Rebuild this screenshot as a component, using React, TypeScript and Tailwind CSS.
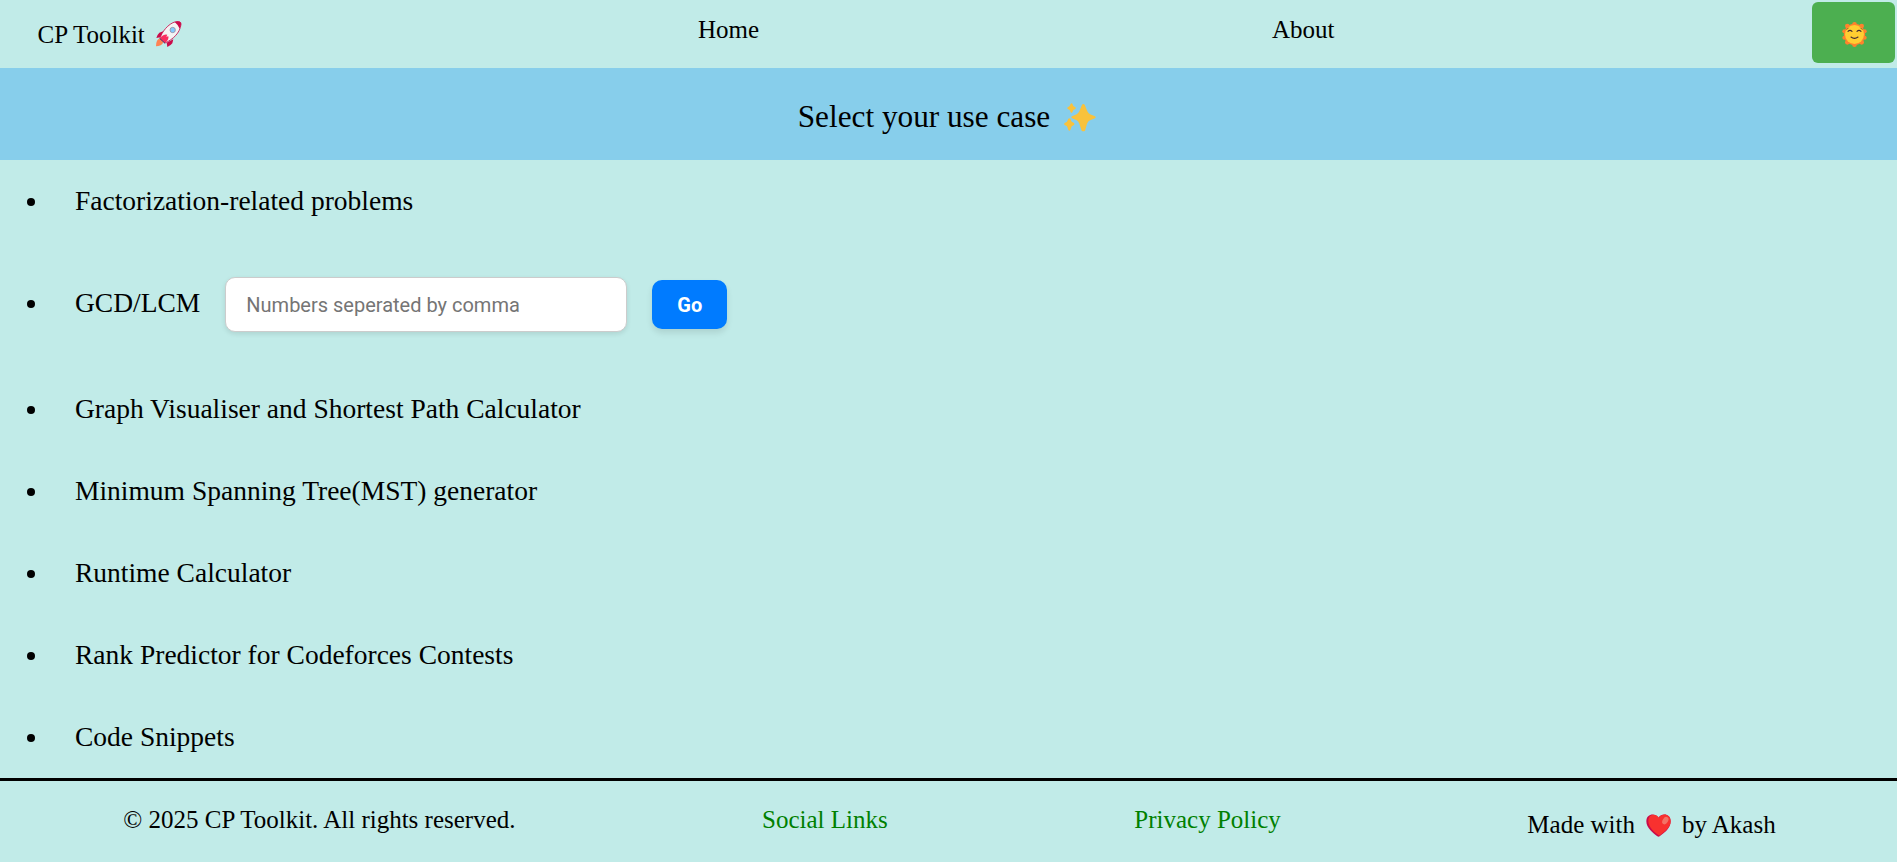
import type { ReactNode } from "react";

function Rocket() {
  return (
    <svg className="ml-[10px] h-[27px] w-[27px] shrink-0" viewBox="45 39 81 81" aria-hidden="true">
      <path d="M60 91 Q48 94 48 115 Q65 115 70 103Z" fill="#ff8354" />
      <path d="M70 70 L58 74 Q50 82 49 90 L65 87Z M100 94 L97 106 Q92 113 82 117 L80 104Z" fill="#ca0b4a" />
      <path d="M60 91 C65 73 84 47 107 41 Q124 38 123 49 C120 75 99 94 75 105Z" fill="#f4f4f4" stroke="#ca0b4a" strokeWidth="2.5" />
      <path d="M104 42 Q124 37 123 49 Q122 56 119 62 Q114 50 104 42Z" fill="#ca0b4a" />
      <path d="M65 85 Q74 77 82 80 L79 86 L85 85 Q88 94 75 106 L60 92Z" fill="#f92f60" />
      <path d="M59 91 L75 106" stroke="#433b6b" strokeWidth="3" />
      <circle cx="98" cy="66" r="8" fill="#83cbff" stroke="#998ea4" strokeWidth="2.5" />
    </svg>
  );
}

function Sparkles() {
  return (
    <svg className="ml-[14px] h-[29px] w-[32px] shrink-0" viewBox="42 36 96 87" fill="#f9c23c" aria-hidden="true">
      <path d="M96 41 Q100 37 104 41 L112 61 Q115 67 120 70 L135 76 Q139 79 135 82 L120 88 Q114 91 111 98 L105 119 Q100 123 95 119 L88 98 Q85 91 80 88 L66 82 Q62 79 66 76 L80 70 Q85 67 88 61Z" />
      <path d="M62 38 Q65 36 67 38 L70 45 L76 49 Q79 51 76 54 L70 57 L67 64 Q64 67 62 64 L59 57 L53 54 Q51 51 53 49 L59 45Z" />
      <path d="M55 83 Q58 80 61 83 L65 92 L72 96 Q74 99 72 102 L65 106 L61 117 Q58 121 55 117 L51 106 L44 102 Q41 99 44 96 L51 92Z" />
    </svg>
  );
}

function Sun() {
  return (
    <svg className="ml-px h-[25px] w-[25px]" viewBox="0 0 75 75" aria-hidden="true">
      <g fill="#ff822d">
        <circle cx="37.5" cy="68" r="7" />
        <circle cx="16" cy="61" r="7" />
        <circle cx="59" cy="61" r="7" />
        <circle cx="7" cy="47" r="6" />
        <circle cx="68" cy="47" r="6" />
        <circle cx="7" cy="28" r="6" />
        <circle cx="68" cy="28" r="6" />
        <circle cx="16" cy="12" r="7" />
        <circle cx="59" cy="12" r="7" />
        <circle cx="37.5" cy="7" r="7" />
        <circle cx="37.5" cy="37.5" r="32" />
      </g>
      <circle cx="37.5" cy="37.5" r="28.5" fill="#ffce31" />
      <g fill="none" stroke="#402a32" strokeWidth="3.2" strokeLinecap="round">
        <path d="M18 28 Q24 22 30 28 M45 28 Q51 22 57 28" />
        <path d="M15 22 L19 18 M60 22 L56 18" strokeWidth="2" />
        <path d="M27 45 Q37.5 53 48 45" />
      </g>
    </svg>
  );
}

function Heart() {
  return (
    <svg className="mx-[11px] mt-[3px] h-[23px] w-[25px] shrink-0" viewBox="0 0 75 69" aria-hidden="true">
      <path d="M37 11 C27 -4 1 -1 1 22 C1 42 21 57 34 67 Q38 69 41 67 C56 56 74 42 74 22 C74 -1 48 -4 37 11Z" fill="#ca0b4a" />
      <path d="M39 11 C30 -3 7 -1 7 21 C7 40 26 55 38 64 Q40 65 42 64 C57 53 74 40 74 22 C74 -1 48 -4 39 11Z" fill="#f8312f" />
      <ellipse cx="58" cy="20" rx="8" ry="12" fill="#f37366" transform="rotate(32 58 20)" />
    </svg>
  );
}

function Bullet() {
  return <span className="mr-[40px] ml-[27px] size-2 shrink-0 rounded-full bg-black" />;
}

function Item({ children }: { children: ReactNode }) {
  return (
    <li className="flex h-[82px] items-center">
      <span className="mt-[2px] flex">
        <Bullet />
      </span>
      <span className="leading-[32px]">{children}</span>
    </li>
  );
}

export default function App() {
  return (
    <div className="flex h-[862px] w-full flex-col overflow-hidden bg-[#c1ebe8] font-['Liberation_Serif',serif] text-[25px] leading-[28px] text-black">
      <header className="flex h-[68px] shrink-0 justify-between pt-[2px] pr-[2px] pl-[37.5px]">
        <div className="flex w-[660.5px] pt-[19px]">
          <span className="whitespace-nowrap">CP Toolkit</span>
          <Rocket />
        </div>
        <a className="mt-[14px] w-[574px]">Home</a>
        <a className="mt-[14px] grow">About</a>
        <button className="flex h-[61px] w-[83px] items-center justify-center rounded-[6px] bg-[#4caf50] pt-[4px]">
          <Sun />
        </button>
      </header>

      <section className="flex h-[92px] shrink-0 items-center justify-center bg-[#87ceeb] pt-[6px] pr-[3px]">
        <h1 className="text-[31.25px] leading-[36px] whitespace-nowrap">Select your use case</h1>
        <Sparkles />
      </section>

      <ul className="shrink-0 text-[27.5px]">
        <Item>Factorization-related problems</Item>
        <li className="flex h-[126px] items-center pb-px">
          <span className="mb-px flex">
            <Bullet />
          </span>
          <span className="mb-[4px] leading-[32px]">GCD/LCM</span>
          <input
            className="ml-[25px] h-[55px] w-[402px] rounded-[10px] border border-[#ccc] bg-white px-[20px] font-[Roboto,sans-serif] text-[20px] shadow-[0_2px_5px_rgba(0,0,0,0.1)] placeholder:text-[#757575]"
            placeholder="Numbers seperated by comma"
          />
          <button className="ml-[25px] h-[49px] w-[75px] rounded-[10px] bg-[#007bff] font-[Roboto,sans-serif] text-[20px] font-bold text-white shadow-[0_4px_6px_rgba(0,0,0,0.1)]">
            Go
          </button>
        </li>
        <Item>Graph Visualiser and Shortest Path Calculator</Item>
        <Item>Minimum Spanning Tree(MST) generator</Item>
        <Item>Runtime Calculator</Item>
        <Item>Rank Predictor for Codeforces Contests</Item>
        <Item>Code Snippets</Item>
      </ul>

      <footer className="flex grow items-start justify-around border-t-[3px] border-black pt-[25px] whitespace-nowrap">
        <p>© 2025 CP Toolkit. All rights reserved.</p>
        <a className="text-[#008000]">Social Links</a>
        <a className="text-[#008000]">Privacy Policy</a>
        <p className="mt-[5px] -mr-[2px] flex">
          Made with
          <Heart />
          by Akash
        </p>
      </footer>
    </div>
  );
}
